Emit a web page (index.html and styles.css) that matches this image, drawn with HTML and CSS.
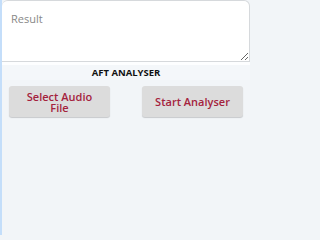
FILE: index.html
```html
<!DOCTYPE html>
<html>
<head>
<meta charset="utf-8">
<link rel="stylesheet" href="styles.css">
</head>
<body>
<div class="app">
  <textarea class="result" placeholder="Result"></textarea>
  <div class="gap"></div>
  <div class="title">AFT ANALYSER</div>
  <div class="actions">
    <button class="btn">Select Audio File</button>
    <button class="btn">Start Analyser</button>
  </div>
</div>
</body>
</html>
```
FILE: styles.css
```css
html, body {
  margin: 0;
  padding: 0;
}
body {
  background: #f2f5f8;
  font-family: "Open Sans", "Noto Sans", sans-serif;
}
.app {
  width: 250px;
  height: 235px;
  border-left: 2px solid #c4defa;
  display: flex;
  flex-direction: column;
  box-sizing: border-box;
  background: #f2f5f8;
}
.result {
  display: block;
  box-sizing: border-box;
  width: 100%;
  height: 62px;
  margin: 0;
  border: 1px solid #d6d9dc;
  border-left: none;
  border-radius: 6px 6px 0 0;
  background: #fff;
  padding: 10px 9px;
  font-family: "Open Sans", "Noto Sans", sans-serif;
  font-size: 11px;
  color: #333;
  resize: vertical;
  outline: none;
}
.result::placeholder {
  color: #888;
}
.gap {
  height: 3px;
  background: #fdfeff;
}
.title {
  height: 15px;
  line-height: 15px;
  text-align: center;
  font-size: 9.5px;
  font-weight: 700;
  color: #111;
  background: #f4f7fa;
}
.actions {
  display: flex;
  justify-content: space-between;
  align-items: flex-start;
  padding: 6px 7px 0 7px;
}
.btn {
  width: 101px;
  height: 31px;
  border: none;
  border-radius: 3px;
  background: #dcdcdc;
  box-shadow: 0 1px 1px rgba(0,0,0,0.18);
  color: #a4223c;
  font-family: "Open Sans", "Noto Sans", sans-serif;
  font-size: 11px;
  font-weight: 600;
  line-height: 11px;
  padding: 0 12px;
}
```
